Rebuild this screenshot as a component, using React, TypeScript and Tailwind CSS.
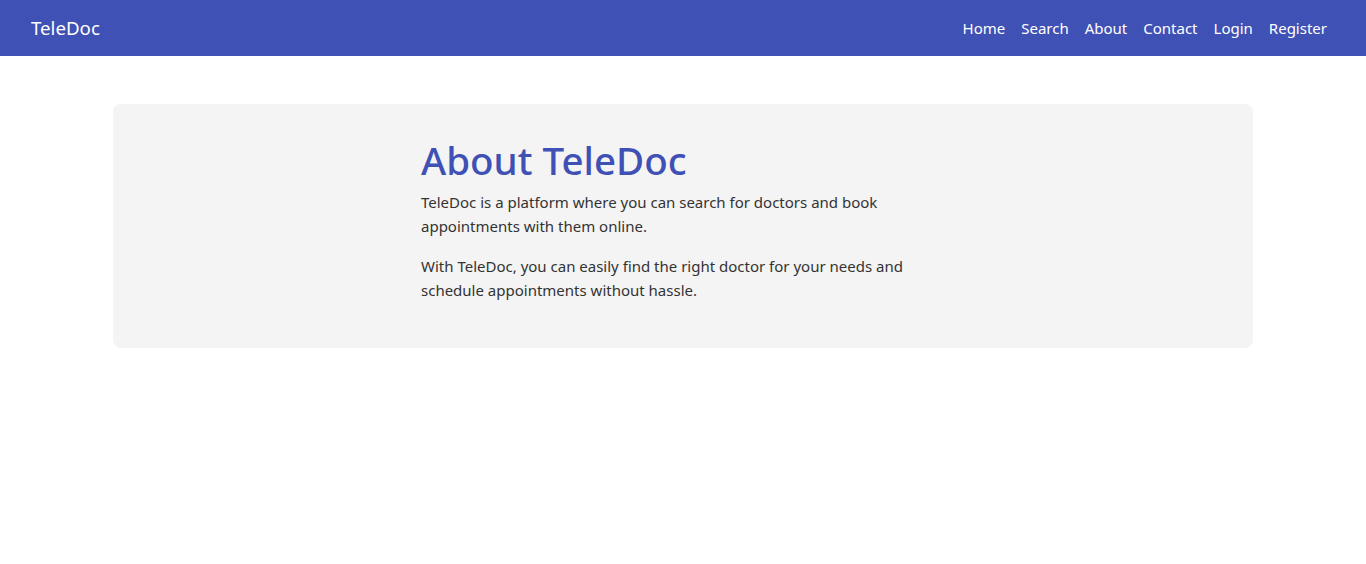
const links = ["Home", "Search", "About", "Contact", "Login", "Register"];

export default function App() {
  return (
    <div className="min-h-screen bg-white font-['Segoe_UI','Noto_Sans',sans-serif]">
      <header className="flex h-14 items-center justify-between bg-[#3f51b5] pl-[31px] pr-[39px] text-white">
        <a href="#" className="text-[18.7px]">TeleDoc</a>
        <nav className="flex gap-4 text-[15px]">
          {links.map((l) => (
            <a key={l} href="#">{l}</a>
          ))}
        </nav>
      </header>

      <main className="mx-auto mt-12 max-w-[1140px] rounded-lg bg-[#f4f4f4] pb-[30px] pt-8">
        <div className="mx-auto w-[524px]">
          <h1 className="mb-1.5 text-[38.5px] font-medium leading-[48px] text-[#3f51b5]">About TeleDoc</h1>
          <p className="mb-4 text-[15px] leading-6 text-[#333]">
            TeleDoc is a platform where you can search for doctors and book appointments with them online.
          </p>
          <p className="mb-4 text-[15px] leading-6 text-[#333]">
            With TeleDoc, you can easily find the right doctor for your needs and schedule appointments without hassle.
          </p>
        </div>
      </main>
    </div>
  );
}
